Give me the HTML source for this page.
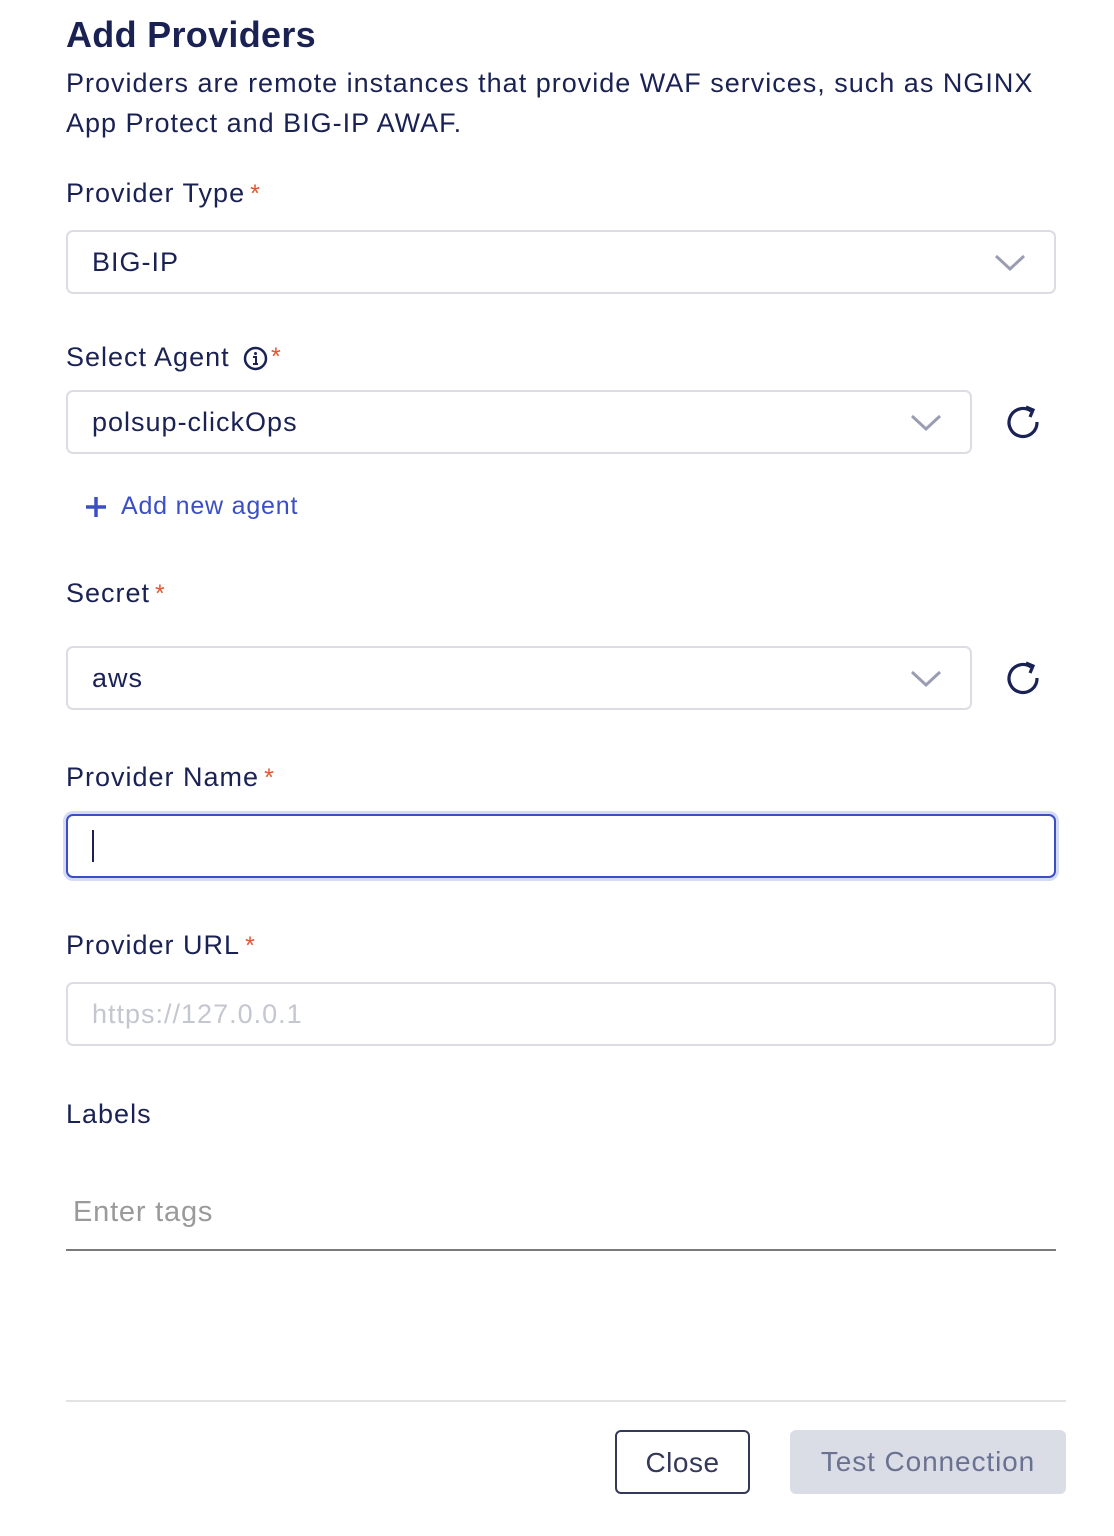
<!DOCTYPE html>
<html><head><meta charset="utf-8"><style>
*{margin:0;padding:0;box-sizing:border-box}
body{width:1114px;height:1536px;background:#fff;font-family:"Liberation Sans",sans-serif;color:#1a2254;position:relative;overflow:hidden}
.a{position:absolute;white-space:nowrap}
.t{font-size:27px;letter-spacing:1px}
.req{color:#e8542f;font-size:25px;margin-left:5px}
.box{position:absolute;border:2px solid #dcdde3;border-radius:7px;background:#fff}
.chev{position:absolute;width:34px;height:20px}
</style></head><body>
<div class="a" style="left:66px;top:14px;font-size:36px;font-weight:bold;letter-spacing:0.3px">Add Providers</div>
<div class="a t" style="left:66px;top:63px;line-height:40px">Providers are remote instances that provide WAF services, such as NGINX<br>App Protect and BIG-IP AWAF.</div>

<div class="a t" style="left:66px;top:178px">Provider Type<span class="req">*</span></div>
<div class="box" style="left:66px;top:230px;width:990px;height:64px"></div>
<div class="a t" style="left:92px;top:247px">BIG-IP</div>
<svg class="chev" style="left:993px;top:252px" viewBox="0 0 34 20"><path d="M3 4 L17 17 L31 4" fill="none" stroke="#9a9db2" stroke-width="3"/></svg>

<div class="a t" style="left:66px;top:342px">Select Agent</div>
<svg class="a" style="left:243px;top:346px" width="25" height="25" viewBox="0 0 25 25"><circle cx="12.5" cy="12.5" r="10.5" fill="none" stroke="#1a2254" stroke-width="2.5"/><circle cx="12.5" cy="7.5" r="1.5" fill="#1a2254"/><path d="M10 11h3v7M10 18h5" stroke="#1a2254" stroke-width="2" fill="none"/></svg>
<div class="a req" style="left:266px;top:343px">*</div>
<div class="box" style="left:66px;top:390px;width:906px;height:64px"></div>
<div class="a t" style="left:92px;top:407px">polsup-clickOps</div>
<svg class="chev" style="left:909px;top:412px" viewBox="0 0 34 20"><path d="M3 4 L17 17 L31 4" fill="none" stroke="#9a9db2" stroke-width="3"/></svg>
<svg class="a" style="left:1005px;top:404px" width="38" height="38" viewBox="0 0 38 38"><path d="M32 18 A14 14 0 1 1 26 7" fill="none" stroke="#1a2254" stroke-width="3.2"/><path d="M21 3 L28 6 L25 13" fill="none" stroke="#1a2254" stroke-width="3.2"/></svg>

<svg class="a" style="left:85px;top:496px" width="22" height="22" viewBox="0 0 22 22"><path d="M11 1v20M1 11h20" stroke="#3b4fc4" stroke-width="3.5"/></svg>
<div class="a" style="left:121px;top:492px;font-size:25px;color:#3b4fc4;letter-spacing:0.8px">Add new agent</div>

<div class="a t" style="left:66px;top:578px">Secret<span class="req">*</span></div>
<div class="box" style="left:66px;top:646px;width:906px;height:64px"></div>
<div class="a t" style="left:92px;top:663px">aws</div>
<svg class="chev" style="left:909px;top:668px" viewBox="0 0 34 20"><path d="M3 4 L17 17 L31 4" fill="none" stroke="#9a9db2" stroke-width="3"/></svg>
<svg class="a" style="left:1005px;top:660px" width="38" height="38" viewBox="0 0 38 38"><path d="M32 18 A14 14 0 1 1 26 7" fill="none" stroke="#1a2254" stroke-width="3.2"/><path d="M21 3 L28 6 L25 13" fill="none" stroke="#1a2254" stroke-width="3.2"/></svg>

<div class="a t" style="left:66px;top:762px">Provider Name<span class="req">*</span></div>
<div class="box" style="left:66px;top:814px;width:990px;height:64px;border:2px solid #3b4fc4;box-shadow:0 0 0 3px #d5daf5"></div>
<div class="a" style="left:92px;top:830px;width:2px;height:32px;background:#1a2254"></div>

<div class="a t" style="left:66px;top:930px">Provider URL<span class="req">*</span></div>
<div class="box" style="left:66px;top:982px;width:990px;height:64px"></div>
<div class="a t" style="left:92px;top:999px;color:#c4c6d0">https://127.0.0.1</div>

<div class="a t" style="left:66px;top:1099px">Labels</div>
<div class="a" style="left:73px;top:1196px;font-size:29px;color:#9a9a9a;letter-spacing:0.8px">Enter tags</div>
<div class="a" style="left:66px;top:1249px;width:990px;height:2px;background:#7a7a7a"></div>

<div class="a" style="left:66px;top:1400px;width:1000px;height:2px;background:#e3e3e3"></div>
<div class="a" style="left:615px;top:1430px;width:135px;height:64px;border:2px solid #34395a;border-radius:6px;font-size:28px;color:#34395a;text-align:center;line-height:62px;letter-spacing:0.5px">Close</div>
<div class="a" style="left:790px;top:1430px;width:276px;height:64px;background:#dadde5;border-radius:6px;font-size:28px;color:#6b7191;text-align:center;line-height:64px;letter-spacing:0.9px">Test Connection</div>
</body></html>
